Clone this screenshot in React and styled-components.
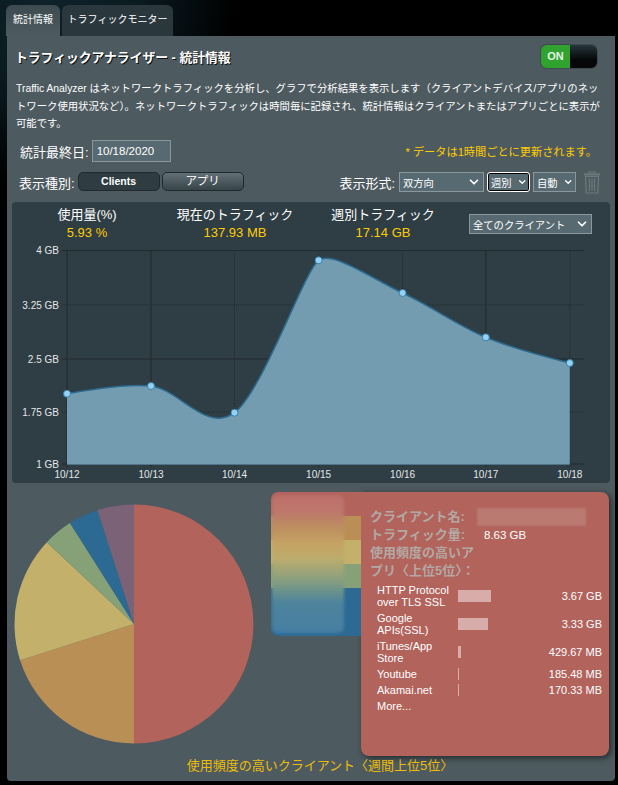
import styled, { createGlobalStyle } from "styled-components"
import { ChevronDown } from "lucide-react"

const GlobalStyle = createGlobalStyle`
  html, body {
    margin: 0;
    padding: 0;
    background: #000;
  }
  body {
    font-family: "Liberation Sans", "Noto Sans CJK JP", sans-serif;
    color: #fff;
  }
`

const chartPoints = [
  { label: "10/12", x: 67, y: 393.7 },
  { label: "10/13", x: 151, y: 386 },
  { label: "10/14", x: 234.5, y: 412.7 },
  { label: "10/15", x: 318.6, y: 260.3, tight: 5 },
  { label: "10/16", x: 402.6, y: 293 },
  { label: "10/17", x: 485.8, y: 337.3 },
  { label: "10/18", x: 569.8, y: 363 },
]
const yTicks = [
  { label: "4 GB", y: 250.5, dotted: false },
  { label: "3.25 GB", y: 305, dotted: true },
  { label: "2.5 GB", y: 359, dotted: false },
  { label: "1.75 GB", y: 412, dotted: true },
  { label: "1 GB", y: 464, dotted: false },
]
const dottedColumns = [false, false, true, true, true, false, true]

const pieSlices = [
  { color: "#b1635c", from: 0, to: 180 },
  { color: "#b98f55", from: 180, to: 252.4 },
  { color: "#c3b16b", from: 252.4, to: 313.2 },
  { color: "#86a178", from: 313.2, to: 327.6 },
  { color: "#2c6a94", from: 327.6, to: 342.2 },
  { color: "#7b6277", from: 342.2, to: 360 },
]
const legendBands = [
  { color: "#b1635c", height: 24 },
  { color: "#b98f55", height: 24 },
  { color: "#c3b16b", height: 24 },
  { color: "#86a178", height: 24 },
  { color: "#2c6a94", height: 48 },
]
const apps = [
  { name: "HTTP Protocol over TLS SSL", bar: 33, value: "3.67 GB" },
  { name: "Google APIs(SSL)", bar: 30, value: "3.33 GB" },
  { name: "iTunes/App Store", bar: 3, value: "429.67 MB" },
  { name: "Youtube", bar: 1, value: "185.48 MB" },
  { name: "Akamai.net", bar: 1, value: "170.33 MB" },
]

// spline handles: a third of the way to each neighbour, tangent kept straight through the point
function controlPoints(points, i) {
  const p = points[i]
  const prev = points[i - 1]
  const next = points[i + 1]
  if (!prev || !next) return { left: p, right: p }
  const s = p.tight || 2
  const d = s + 1
  const left = { x: (s * p.x + prev.x) / d, y: (s * p.y + prev.y) / d }
  const right = { x: (s * p.x + next.x) / d, y: (s * p.y + next.y) / d }
  const fix = ((right.y - left.y) * (right.x - p.x)) / (right.x - left.x) + p.y - right.y
  left.y += fix
  right.y += fix
  return { left, right }
}

function splinePath(points) {
  let d = `M ${points[0].x} ${points[0].y}`
  for (let i = 1; i < points.length; i++) {
    const a = controlPoints(points, i - 1).right
    const b = controlPoints(points, i).left
    d += ` C ${a.x} ${a.y} ${b.x} ${b.y} ${points[i].x} ${points[i].y}`
  }
  return d
}

function slicePath(from, to) {
  const cx = 120
  const cy = 120
  const r = 119.5
  const point = (deg) => {
    const rad = (deg * Math.PI) / 180
    return `${cx + r * Math.sin(rad)} ${cy - r * Math.cos(rad)}`
  }
  const large = to - from > 180 ? 1 : 0
  return `M ${cx} ${cy} L ${point(from)} A ${r} ${r} 0 ${large} 1 ${point(to)} Z`
}

function Select({ children, width, focused }) {
  return (
    <SelectBox $width={width} $focused={focused}>
      <span>{children}</span>
      <ChevronDown size={14} strokeWidth={3} />
    </SelectBox>
  )
}

function TrashIcon() {
  return (
    <svg width="18" height="23" viewBox="0 0 18 23" fill="none" stroke="#6c797d" strokeWidth="1.2">
      <path d="M6 3 V1 H12 V3" />
      <path d="M1 3.5 H17" strokeWidth="2" />
      <path d="M2.5 5.5 L3.2 22 H14.8 L15.5 5.5 Z" />
      <path d="M6.5 7.5 V20 M9 7.5 V20 M11.5 7.5 V20" />
    </svg>
  )
}

function TrafficChart() {
  const line = splinePath(chartPoints)
  const last = chartPoints[chartPoints.length - 1]
  return (
    <ChartSvg viewBox="12 242 598 241">
      {yTicks.map((t) => (
        <line key={t.label} x1="62" x2="584" y1={t.y} y2={t.y} stroke="#20292e" strokeDasharray={t.dotted ? "1 1" : undefined} />
      ))}
      {chartPoints.map((p, i) => (
        <line key={p.label} x1={p.x} x2={p.x} y1="250" y2="467" stroke="#20292e" strokeDasharray={dottedColumns[i] ? "1 1" : undefined} />
      ))}
      <path d={`${line} L ${last.x} 464 L 67 464 Z`} fill="#739cb0" />
      <path d={line} fill="none" stroke="#2b6a8e" strokeWidth="1.5" />
      <line x1="67" x2={last.x} y1="464.5" y2="464.5" stroke="#4f7488" />
      {chartPoints.map((p) => (
        <circle key={p.label} cx={p.x} cy={p.y} r="3.5" fill="#93d2f5" stroke="#3c7fa8" />
      ))}
      {yTicks.map((t) => (
        <AxisText key={t.label} x="59" y={t.y + 3.5} textAnchor="end">{t.label}</AxisText>
      ))}
      {chartPoints.map((p) => (
        <AxisText key={p.label} x={p.x} y="478" textAnchor="middle">{p.label}</AxisText>
      ))}
    </ChartSvg>
  )
}

export default function App() {
  return (
    <Page>
      <GlobalStyle />
      <Tabs>
        <Tab $active>統計情報</Tab>
        <Tab>トラフィックモニター</Tab>
      </Tabs>
      <Panel>
        <TitleRow>
          <Title>トラフィックアナライザー - 統計情報</Title>
          <Switch>
            <SwitchOn>ON</SwitchOn>
            <SwitchOff />
          </Switch>
        </TitleRow>
        <Description>
          Traffic Analyzer はネットワークトラフィックを分析し、グラフで分析結果を表示します（クライアントデバイス/アプリのネッ<br />
          トワーク使用状況など）。ネットワークトラフィックは時間毎に記録され、統計情報はクライアントまたはアプリごとに表示が<br />
          可能です。
        </Description>
        <DateRow>
          <FieldLabel>統計最終日:</FieldLabel>
          <DateInput readOnly value="10/18/2020" />
          <Note>* データは1時間ごとに更新されます。</Note>
        </DateRow>
        <ControlRow>
          <FieldLabel>表示種別:</FieldLabel>
          <ToggleButton $active>Clients</ToggleButton>
          <ToggleButton>アプリ</ToggleButton>
          <FormatGroup>
            <FieldLabel>表示形式:</FieldLabel>
            <Select width={85}>双方向</Select>
            <Select width={43} focused>週別</Select>
            <Select width={43}>自動</Select>
            <TrashIcon />
          </FormatGroup>
        </ControlRow>

        <ChartCard>
          <StatRow>
            <Stat>
              <StatTitle>使用量(%)</StatTitle>
              <StatValue>5.93 %</StatValue>
            </Stat>
            <Stat>
              <StatTitle>現在のトラフィック</StatTitle>
              <StatValue>137.93 MB</StatValue>
            </Stat>
            <Stat>
              <StatTitle>週別トラフィック</StatTitle>
              <StatValue>17.14 GB</StatValue>
            </Stat>
            <ClientSelect>
              <Select width={123}>全てのクライアント</Select>
            </ClientSelect>
          </StatRow>
          <TrafficChart />
        </ChartCard>

        <BottomRow>
          <PieBox>
            <svg width="240" height="240" viewBox="0 0 240 240">
              {pieSlices.map((s) => (
                <path key={s.color} d={slicePath(s.from, s.to)} fill={s.color} />
              ))}
            </svg>
          </PieBox>
          <Legend>
            {legendBands.map((b) => (
              <LegendBand key={b.color} $color={b.color} $height={b.height} />
            ))}
            <LegendBlur />
          </Legend>
          <Tooltip>
            <InfoRow>
              <InfoLabel>クライアント名:</InfoLabel>
              <BlurredName />
            </InfoRow>
            <InfoRow>
              <InfoLabel>トラフィック量:</InfoLabel>
              <InfoValue>8.63 GB</InfoValue>
            </InfoRow>
            <InfoRow>
              <InfoLabel>使用頻度の高いアプリ〈上位5位〉：</InfoLabel>
            </InfoRow>
            <AppList>
              {apps.map((a) => (
                <AppRow key={a.name}>
                  <AppName>{a.name}</AppName>
                  <AppBar $width={a.bar} />
                  <AppValue>{a.value}</AppValue>
                </AppRow>
              ))}
              <AppRow>
                <AppName>More...</AppName>
              </AppRow>
            </AppList>
          </Tooltip>
        </BottomRow>
        <Caption>使用頻度の高いクライアント〈週間上位5位〉</Caption>
      </Panel>
    </Page>
  )
}

const Page = styled.div`
  width: 618px;
  height: 785px;
  padding-top: 5px;
  box-sizing: border-box;
  overflow: hidden;
  background: radial-gradient(circle at 50px 0, #0e2229 0, #0a1a20 90px, #000 185px);
`
const Tabs = styled.div`
  display: flex;
  gap: 2px;
  padding-left: 6px;
`
const Tab = styled.div`
  height: 31px;
  line-height: 30px;
  width: ${(props) => (props.$active ? "54px" : "111px")};
  box-sizing: border-box;
  text-align: center;
  white-space: nowrap;
  font-size: 10px;
  border-radius: 6px 6px 0 0;
  background: ${(props) => (props.$active ? "linear-gradient(#3d4a4f, #4d5a5f)" : "#2a373d")};
`
const Panel = styled.div`
  width: 608px;
  height: 745px;
  margin-left: 7px;
  padding: 0 5px;
  box-sizing: border-box;
  background: #4d5a5f;
  border-radius: 0 0 4px 4px;
`
const TitleRow = styled.div`
  display: flex;
  align-items: center;
  justify-content: space-between;
  height: 23px;
  padding: 9px 13px 0 3px;
`
const Title = styled.h1`
  margin: 0;
  font-size: 12.8px;
  font-weight: 700;
  text-shadow: 1px 1px 0 #111;
`
const Switch = styled.div`
  display: flex;
  width: 56px;
  height: 23px;
  border-radius: 6px;
  overflow: hidden;
  box-shadow: 0 0 0 1px #3e4a4f;
`
const SwitchOn = styled.div`
  width: 29px;
  background: #2fa32e;
  font-size: 11px;
  font-weight: 700;
  line-height: 23px;
  text-align: center;
  color: #e6f2e6;
`
const SwitchOff = styled.div`
  flex: 1;
  background: linear-gradient(#27353b, #050708 65%);
`
const Description = styled.p`
  margin: 12px 0 0;
  padding: 0 4px;
  font-size: 10.35px;
  line-height: 17.5px;
  white-space: nowrap;
  color: #fff;
`
const DateRow = styled.div`
  display: flex;
  align-items: center;
  height: 22px;
  margin-top: 7.5px;
  padding: 0 13px 0 8px;
`
const FieldLabel = styled.span`
  font-size: 13px;
  color: #fff;
  white-space: nowrap;
`
const DateInput = styled.input`
  width: 79px;
  height: 22px;
  margin-left: 3px;
  padding: 0 4px;
  box-sizing: border-box;
  background: #576a72;
  border: 1px solid #8b979b;
  color: #fff;
  font-family: inherit;
  font-size: 11.5px;
  outline: none;
`
const Note = styled.span`
  margin-left: auto;
  font-size: 11.2px;
  color: #ffcc00;
`
const ControlRow = styled.div`
  display: flex;
  align-items: center;
  height: 20px;
  margin-top: 10px;
  padding: 0 9px 0 7px;
`
const ToggleButton = styled.div`
  align-self: flex-start;
  width: 82px;
  height: 19px;
  margin-left: ${(props) => (props.$active ? "3px" : "2px")};
  box-sizing: border-box;
  border: 1px solid #20292d;
  border-radius: 5px;
  font-size: ${(props) => (props.$active ? "10.5px" : "11.5px")};
  font-weight: ${(props) => (props.$active ? 700 : 400)};
  line-height: 17px;
  text-align: center;
  background: ${(props) => (props.$active ? "#2f3c42" : "linear-gradient(#626f74, #37444a)")};
`
const FormatGroup = styled.div`
  display: flex;
  align-items: center;
  gap: 3px;
  margin-left: auto;
  span {
    margin-right: 1px;
  }
  svg:last-child {
    margin-left: 4px;
  }
`
const SelectBox = styled.div`
  display: flex;
  align-items: center;
  justify-content: space-between;
  width: ${(props) => props.$width}px;
  height: 20px;
  padding: 0 2px 0 3px;
  box-sizing: border-box;
  background: #576a72;
  border: 1px solid #8b979b;
  font-size: 10.3px;
  color: #fff;
  white-space: nowrap;
  ${(props) => props.$focused && `
    border: 1px solid #fff;
    border-radius: 3px;
    box-shadow: inset 0 0 0 1px #000;
  `}
`
const ChartCard = styled.div`
  height: 281px;
  margin-top: 10px;
  background: #2f3d44;
  border-radius: 4px;
  overflow: hidden;
`
const StatRow = styled.div`
  display: flex;
  height: 36px;
  padding: 4px 18px 0 1px;
`
const Stat = styled.div`
  width: 148px;
  text-align: center;
`
const StatTitle = styled.div`
  font-size: 13px;
  line-height: 18px;
`
const StatValue = styled.div`
  font-size: 13px;
  line-height: 18px;
  color: #ffcc00;
`
const ClientSelect = styled.div`
  margin-left: auto;
  padding-top: 8px;
`
const ChartSvg = styled.svg`
  display: block;
  width: 598px;
  height: 241px;
`
const AxisText = styled.text`
  font-size: 10px;
  fill: #e4e8ea;
`
const BottomRow = styled.div`
  display: flex;
  align-items: flex-start;
  margin-top: 9px;
`
const PieBox = styled.div`
  width: 259px;
  padding: 12px 0 0 2px;
  box-sizing: border-box;
  svg {
    display: block;
  }
`
const Legend = styled.div`
  position: relative;
  display: flex;
  flex-direction: column;
  width: 90px;
  border-radius: 7px 0 0 7px;
  overflow: hidden;
`
const LegendBand = styled.div`
  height: ${(props) => props.$height}px;
  background: ${(props) => props.$color};
`
const LegendBlur = styled.div`
  position: absolute;
  top: 3px;
  left: 1px;
  width: 72px;
  height: 138px;
  border-radius: 6px;
  filter: blur(1.5px);
  background: linear-gradient(
    #bd6e6c 0,
    #bd7a6a 14%,
    #bd8f60 24%,
    #c5a363 36%,
    #bcac6d 46%,
    #96a27b 58%,
    #709689 68%,
    #4e839c 78%,
    #477ea2 100%
  );
`
const Tooltip = styled.div`
  width: 248px;
  height: 264px;
  padding: 16px 7px 0 9px;
  box-sizing: border-box;
  background: #b1635c;
  border-radius: 0 8px 8px 8px;
  box-shadow: 2px 2px 6px rgba(0, 0, 0, 0.55);
`
const InfoRow = styled.div`
  display: flex;
  align-items: center;
`
const InfoLabel = styled.div`
  width: 107px;
  font-size: 13px;
  line-height: 18px;
  font-weight: 700;
  color: #b3a8a3;
`
const InfoValue = styled.div`
  margin-left: 7px;
  font-size: 11.5px;
`
const BlurredName = styled.div`
  width: 109px;
  height: 18px;
  background: #ba7971;
  filter: blur(1px);
`
const AppList = styled.div`
  margin-top: 2px;
  padding-left: 7px;
`
const AppRow = styled.div`
  display: grid;
  grid-template-columns: 81px 1fr auto;
  align-items: center;
  padding: 2px 0;
  font-size: 11px;
  line-height: 12px;
`
const AppName = styled.div`
  white-space: normal;
`
const AppBar = styled.div`
  width: ${(props) => props.$width}px;
  height: 12px;
  background: #d8aca8;
`
const AppValue = styled.div`
  text-align: right;
`
const Caption = styled.div`
  margin-top: 2px;
  padding-left: 18px;
  text-align: center;
  font-size: 13px;
  line-height: 16px;
  color: #ecbc0c;
`
